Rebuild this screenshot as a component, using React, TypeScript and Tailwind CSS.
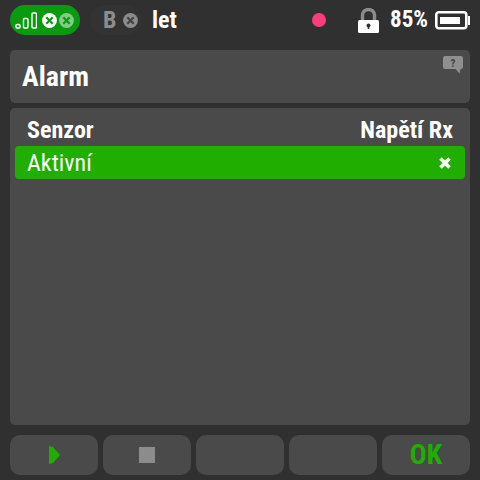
const CircleX = ({ bg, fg }: { bg: string; fg: string }) => (
  <svg width="15" height="15" viewBox="0 0 15 15" className="shrink-0">
    <circle cx="7.5" cy="7.5" r="7.4" fill={bg} />
    <path d="M4.3 4.3l6.4 6.4M10.7 4.3l-6.4 6.4" stroke={fg} strokeWidth="2.2" />
  </svg>
);

const Signal = () => (
  <svg width="22" height="17" viewBox="0 0 22 17" fill="none" stroke="#fff" strokeWidth="1.4" className="shrink-0">
    <rect x="1" y="12.5" width="4" height="3.5" rx="1" />
    <rect x="8.5" y="6.5" width="4.5" height="9.5" rx="1" />
    <rect x="17" y="1" width="4.5" height="15" rx="1" />
  </svg>
);

const Lock = () => (
  <svg width="21" height="25" viewBox="0 0 21 25" className="shrink-0">
    <path d="M4.5 13V7a6 5.5 0 0 1 12 0v6" fill="none" stroke="#8c8c8c" strokeWidth="3.4" />
    <rect x="0" y="12" width="21" height="13" rx="1.5" fill="#fff" />
    <circle cx="10.5" cy="17.5" r="2" fill="#333" />
    <rect x="9.7" y="17.5" width="1.6" height="3.5" fill="#333" />
  </svg>
);

const Battery = () => (
  <svg width="35" height="19" viewBox="0 0 35 19" className="shrink-0">
    <rect x="1.3" y="1.3" width="30" height="16" rx="2.5" fill="none" stroke="#fff" strokeWidth="2.6" />
    <rect x="5" y="6" width="20" height="7" fill="#fff" />
    <rect x="33" y="5" width="2" height="9" fill="#fff" />
  </svg>
);

const Help = () => (
  <svg width="20" height="18" viewBox="0 0 20 18" className="shrink-0">
    <path d="M2 0h16a2 2 0 0 1 2 2v9a2 2 0 0 1-2 2h-.5l-1 4.5-4-4.5H2a2 2 0 0 1-2-2V2a2 2 0 0 1 2-2z" fill="#8f8f8f" />
    <text x="10" y="11" textAnchor="middle" fontSize="11" fontWeight="700" fill="#444" fontFamily="Roboto, sans-serif">?</text>
  </svg>
);

const FootButton = ({ children }: { children?: React.ReactNode }) => (
  <div className="flex h-10 flex-1 items-center justify-center rounded-[10px] bg-[#4a4a4a]">{children}</div>
);

export default function App() {
  return (
    <div className="flex h-[480px] w-[480px] flex-col overflow-hidden bg-[#303030] font-['Roboto',sans-serif] text-white [font-stretch:75%]">
      <div className="flex h-[50px] items-center pb-[10px] pl-[10px] pr-[10px]">
        <div className="flex h-[30px] w-[70px] shrink-0 items-center rounded-full bg-[#0a9a10] pl-[5px]">
          <Signal />
          <span className="ml-[5px] flex">
            <CircleX bg="#ffffff" fg="#0a9a10" />
          </span>
          <span className="ml-[2px] flex">
            <CircleX bg="#83cc87" fg="#0a9a10" />
          </span>
        </div>
        <div className="ml-[10px] flex h-[30px] w-[52px] shrink-0 items-center gap-[7px] rounded-full bg-[#333333] pl-[13px]">
          <span className="text-[24px] leading-none font-bold text-[#8c8c8c]">B</span>
          <CircleX bg="#8c8c8c" fg="#444444" />
        </div>
        <span className="ml-[10px] text-[24px] font-bold">let</span>
        <div className="ml-auto flex items-center">
          <div className="mr-[32px] h-[14px] w-[14px] rounded-full bg-[#fb3d7e]" />
          <Lock />
          <span className="ml-[11px] mr-[7px] text-[23px] font-bold">85%</span>
          <Battery />
        </div>
      </div>

      <div className="mx-[10px] flex h-[53px] items-start justify-between rounded-[5px] bg-[#4a4a4a] pl-[12px] pr-[7px]">
        <span className="text-[28px] leading-[53px] font-bold">Alarm</span>
        <div className="pt-[6px]">
          <Help />
        </div>
      </div>

      <div className="mx-[10px] mt-[5px] h-[317px] rounded-[5px] bg-[#4a4a4a] px-[5px]">
        <div className="flex h-[38px] items-center justify-between px-[12px] pt-[6px] text-[24px] font-bold">
          <span>Senzor</span>
          <span>Napětí Rx</span>
        </div>
        <div className="flex h-[33px] items-center justify-between rounded-[4px] bg-[#20ae00] pl-[12px] pr-[14px] text-[24px]">
          <span>Aktivní</span>
          <svg width="12" height="12" viewBox="0 0 12 12">
            <path d="M1.5 1.5l9 9M10.5 1.5l-9 9" stroke="#fff" strokeWidth="3.6" />
          </svg>
        </div>
      </div>

      <div className="mx-[10px] mt-[10px] flex gap-[5px]">
        <FootButton>
          <svg width="12" height="18" viewBox="0 0 12 18" className="ml-[1px]">
            <path d="M0 0L4 1L11 9L4 17L0 18z" fill="#20ae00" />
          </svg>
        </FootButton>
        <FootButton>
          <div className="h-4 w-4 bg-[#8c8c8c]" />
        </FootButton>
        <FootButton />
        <FootButton />
        <FootButton>
          <span className="text-[28px] font-bold text-[#20ae00]">OK</span>
        </FootButton>
      </div>
    </div>
  );
}
